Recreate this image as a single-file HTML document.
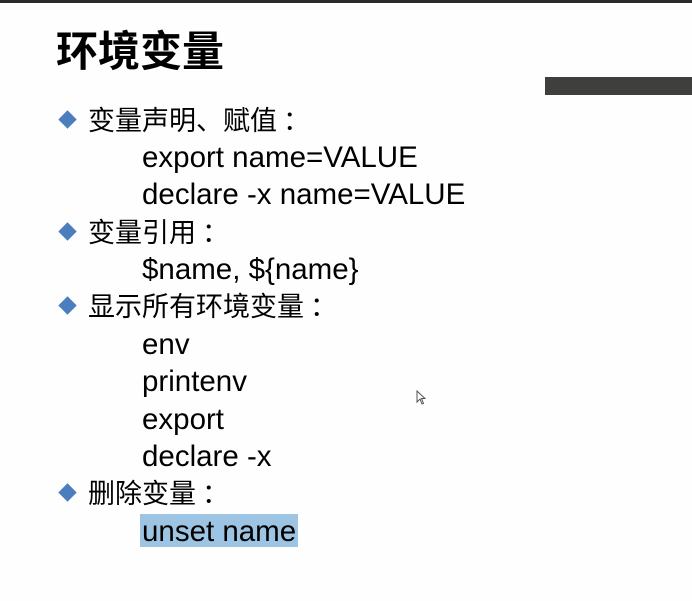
<!DOCTYPE html>
<html><head><meta charset="utf-8"><style>
body{margin:0;width:692px;height:601px;background:#fdfefd;position:relative;overflow:hidden;font-family:"Liberation Sans","Noto Sans CJK SC",sans-serif;color:#000}
.top{position:absolute;left:0;top:0;width:692px;height:3px;background:#2a2a2a}
.bar{position:absolute;left:545px;top:77px;width:147px;height:18px;background:#3f403e}
.t{position:absolute;left:56px;top:24px;font-size:42px;font-weight:bold;line-height:50px;font-family:"Noto Sans CJK SC",sans-serif}
.l{position:absolute;font-size:29.5px;line-height:36px;white-space:nowrap}
.b{left:88px;font-family:"Noto Sans CJK SC",sans-serif;font-size:27px}
.s{left:142px}
.d{position:absolute;width:13px;height:13px;background:#4a7ebf;transform:rotate(45deg)}
.hl{background:#9dc4e2}
</style></head><body>
<div class="top"></div><div class="bar"></div>
<div class="t">环境变量</div>
<div class="d" style="left:61px;top:113px"></div>
<div class="l b" style="top:101px">变量声明、赋值 ：</div>
<div class="l s" style="top:140px">export name=VALUE</div>
<div class="l s" style="top:177px">declare -x name=VALUE</div>
<div class="d" style="left:61px;top:225px"></div>
<div class="l b" style="top:213px">变量引用 ：</div>
<div class="l s" style="top:252px">$name, ${name}</div>
<div class="d" style="left:61px;top:299px"></div>
<div class="l b" style="top:287px">显示所有环境变量 ：</div>
<div class="l s" style="top:327px">env</div>
<div class="l s" style="top:364px">printenv</div>
<div class="l s" style="top:402px">export</div>
<div class="l s" style="top:439px">declare -x</div>
<div class="d" style="left:61px;top:486px"></div>
<div class="l b" style="top:474px">删除变量 ：</div>
<div class="l s" style="top:514px;left:140px"><span class="hl" style="padding:0 2px;display:inline-block;height:33px">unset name</span></div>
<svg style="position:absolute;left:416px;top:390px" width="10" height="15" viewBox="0 0 10 15"><path d="M1 1V12L4 9L6 14L7.5 13.5L5.5 8.5H9Z" fill="#fff" stroke="#555" stroke-width="1"/></svg>
</body></html>
